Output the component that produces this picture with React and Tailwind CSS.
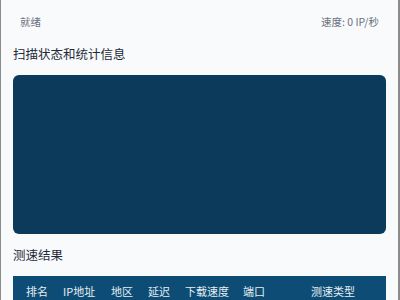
export default function App() {
  const cols = [
    ["排名", "w-[37px]"],
    ["IP地址", "w-[48px]"],
    ["地区", "w-[37px]"],
    ["延迟", "w-[37px]"],
    ["下载速度", "w-[58px]"],
    ["端口", "w-[68px]"],
    ["测速类型", "flex-1"],
  ];
  return (
    <div
      className="w-[400px] h-[300px] overflow-hidden bg-[#f8fafc] border-l border-r-2 border-[#8c8c8c] px-[12px]"
      style={{ fontFamily: '"Noto Sans CJK SC", "Noto Sans", sans-serif' }}
    >
      <div className="flex justify-between items-center h-[22px] mt-[11px] px-[7px] text-[10.5px] text-[#6b7280]">
        <span>就绪</span>
        <span>速度: 0 IP/秒</span>
      </div>
      <div className="mt-[11px] h-[20px] flex items-center text-[12.5px] text-[#1f2937]">扫描状态和统计信息</div>
      <div className="mt-[11px] h-[159px] rounded-[6px] bg-[#0b3a5a]"></div>
      <div className="mt-[10px] h-[22px] flex items-center text-[12.5px] text-[#1f2937]">测速结果</div>
      <div className="mt-[10px] h-[40px] bg-[#0d4d75] flex items-start pt-[6px] text-[11px] text-[#e5edf3]">
        {cols.map(([t, w]) => (
          <div key={t} className={`${w} pl-[13px] whitespace-nowrap h-[18px] flex items-center`}>{t}</div>
        ))}
      </div>
    </div>
  );
}
